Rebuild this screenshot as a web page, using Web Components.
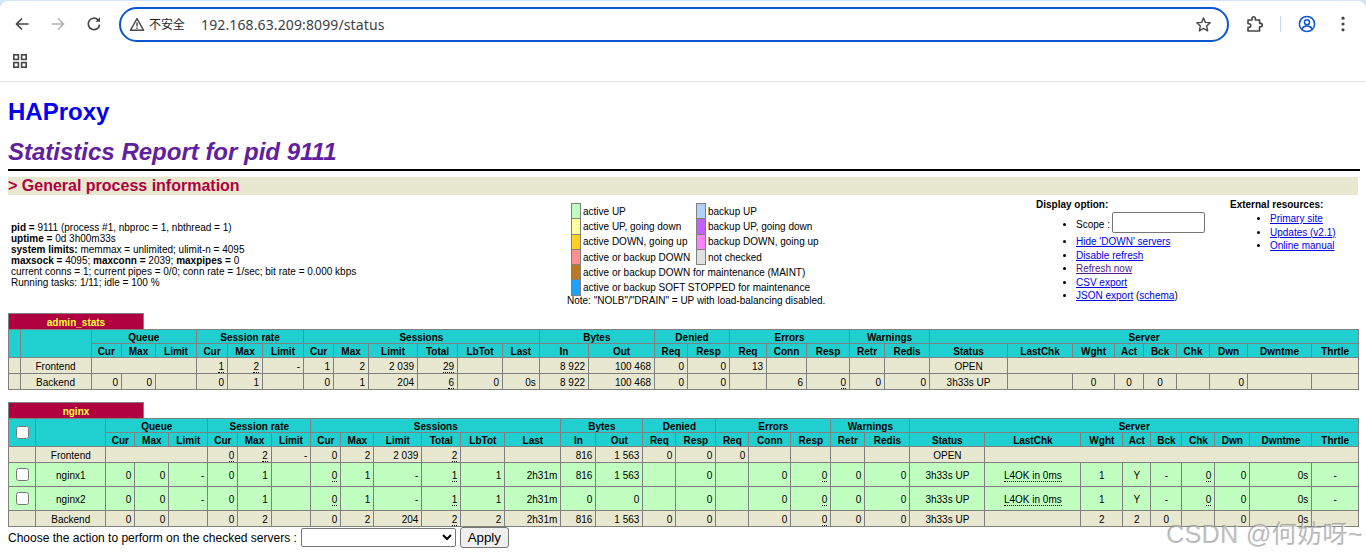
<!DOCTYPE html>
<html lang="zh"><head><meta charset="utf-8"><title>Statistics Report for HAProxy</title>
<style>
html,body{margin:0;padding:0;background:#fff;height:560px;overflow:hidden}
body{font-family:"Liberation Sans",Arial,sans-serif;font-size:12px}
water-mark{position:absolute;right:3px;bottom:10px}
</style></head><body>
<browser-chrome url="192.168.63.209:8099/status" security="不安全"></browser-chrome>
<stats-page>
  <report-head></report-head>
  <general-info>
    <process-info></process-info>
    <status-legend></status-legend>
    <display-options></display-options>
    <external-links></external-links>
  </general-info>
  <proxy-table name="admin_stats" table="admin"></proxy-table>
  <proxy-table name="nginx" table="nginx" checks></proxy-table>
  <action-form></action-form>
</stats-page>
<water-mark></water-mark>
<script>
const el=(name,css,html,init)=>{customElements.define(name,class extends HTMLElement{
  connectedCallback(){ if(this.shadowRoot)return; const r=this.attachShadow({mode:'open'});
    r.innerHTML=`<style>${css}</style>`+(typeof html==='function'?html(this):html); if(init)init(this,r);} });};

el('browser-chrome',`
:host{display:block;height:82px;box-sizing:border-box;border-bottom:1px solid #e3e3e3;background:#d3e3fd;padding-top:1px;font-family:"Noto Sans","Noto Sans CJK SC",sans-serif;color:#1f1f1f}
.inner{background:#fff;height:80px;border-radius:8px 8px 0 0;display:flex;flex-direction:column}
.tool{height:46px;flex:none;display:flex;align-items:center;padding:0 0 0 4px;box-sizing:border-box}
.btn{width:36px;height:36px;display:flex;align-items:center;justify-content:center;flex:none}
.btn svg{display:block}
.omni{flex:none;margin-left:7px;width:1110px;height:35px;box-sizing:border-box;border:2px solid #0b57d0;border-radius:18px;display:flex;align-items:center;padding:0 15px 0 8px}
.sec{font-size:12px;margin-left:4px;width:52px;color:#1f1f1f;letter-spacing:-.1px}
.url{font-size:14px;color:#3c4043;flex:1;letter-spacing:.12px}
.sep{width:1px;height:16px;background:#c7d7f2;flex:none;margin:0 8px 0 7px}
.book{height:28px;flex:none;padding:0 0 0 12px;display:flex;align-items:center}
`,h=>`<div class="inner"><div class="tool">
<span class="btn"><svg width="16" height="16" viewBox="0 0 16 16" fill="none" stroke="#474747" stroke-width="1.7"><path d="M14.5 8H2.5M8 2.5 2.5 8 8 13.5"/></svg></span>
<span class="btn"><svg width="16" height="16" viewBox="0 0 16 16" fill="none" stroke="#b4b4b4" stroke-width="1.7"><path d="M1.5 8h12M8 2.5 13.5 8 8 13.5"/></svg></span>
<span class="btn"><svg width="16" height="16" viewBox="0 0 16 16" fill="none" stroke="#474747" stroke-width="1.7"><path d="M13.6 8.6A5.7 5.7 0 1 1 12 3.9"/><path d="M14 1.2v4.6H9.4" fill="#474747" stroke="none"/></svg></span>
<div class="omni">
<svg width="16" height="15" viewBox="0 0 16 15" fill="none" stroke="#474747" stroke-width="1.4"><path d="M8 1.7 14.6 13.3H1.4Z" stroke-linejoin="round"/><path d="M8 5.6v4M8 10.6v1.4"/></svg>
<span class="sec">${h.getAttribute('security')}</span><span class="url">${h.getAttribute('url')}</span>
<svg width="17" height="17" viewBox="0 0 17 17" fill="none" stroke="#474747" stroke-width="1.4"><path d="M8.5 2 10.4 6.4 15.2 6.8 11.6 10 12.7 14.8 8.5 12.3 4.3 14.8 5.4 10 1.8 6.8 6.6 6.4Z" stroke-linejoin="round"/></svg>
</div>
<span class="btn" style="margin-left:8px"><svg width="18" height="18" viewBox="0 0 18 18" fill="none" stroke="#474747" stroke-width="1.6"><path d="M2 5h4V3.4a1.7 1.7 0 0 1 3.4 0V5h4.2v3.4h1a1.6 1.6 0 0 1 0 3.4h-1V16H2v-3.6h1a1.7 1.7 0 0 0 0-3.6H2Z" stroke-linejoin="round"/></svg></span>
<span class="sep"></span>
<span class="btn"><svg width="18" height="18" viewBox="0 0 18 18" fill="none" stroke="#0b57d0" stroke-width="1.5"><circle cx="9" cy="9" r="7.6"/><circle cx="9" cy="7.2" r="2.5"/><path d="M3.8 14c1.2-2.2 3-2.9 5.2-2.9s4 .7 5.2 2.9"/></svg></span>
<span class="btn"><svg width="4" height="16" viewBox="0 0 4 16" fill="#474747"><circle cx="2" cy="2.2" r="1.6"/><circle cx="2" cy="8" r="1.6"/><circle cx="2" cy="13.8" r="1.6"/></svg></span>
</div>
<div class="book"><svg width="16" height="16" viewBox="0 0 16 16" fill="none" stroke="#474747" stroke-width="1.6"><rect x="1.8" y="1.8" width="4.6" height="4.6"/><rect x="9.6" y="1.8" width="4.6" height="4.6"/><rect x="1.8" y="9.6" width="4.6" height="4.6"/><rect x="9.6" y="9.6" width="4.6" height="4.6"/></svg></div>
</div>`);

el('stats-page',`:host{display:block;padding:16px 8px 0;color:#000;font-family:"Liberation Sans",Arial,sans-serif;font-size:12px}`,`<slot></slot>`);

el('report-head',`
:host{display:block}
a{display:block;font-size:24px;line-height:28px;font-weight:bold;color:#0000ee;text-decoration:none;margin-bottom:12px}
h2{font-size:24px;line-height:28px;font-weight:bold;font-style:italic;color:#6020a0;margin:0}
.hr{border-bottom:2px solid #000;height:3px;margin:0 -2px 6px 0}
h3{font-size:16px;line-height:18px;height:18px;font-weight:bold;color:#b00040;background:#e8e8d0;margin:0}
`,`<a href="#">HAProxy</a><h2>Statistics Report for pid 9111</h2><div class="hr"></div><h3>&gt; General process information</h3>`);

el('general-info',`:host{display:flex;height:118px;font-size:10px;line-height:11px}`,`<slot></slot>`);

el('process-info',`:host{display:block;width:559px;box-sizing:border-box;padding:27px 0 0 3px;white-space:nowrap}`,
`<b>pid = </b>9111 (process #1, nbproc = 1, nbthread = 1)<br><b>uptime = </b>0d 3h00m33s<br><b>system limits:</b> memmax = unlimited; ulimit-n = 4095<br><b>maxsock = </b>4095; <b>maxconn = </b>2039; <b>maxpipes = </b>0<br>current conns = 1; current pipes = 0/0; conn rate = 1/sec; bit rate = 0.000 kbps<br>Running tasks: 1/11; idle = 100 %`);

el('status-legend',`
:host{display:block;width:469px;padding-top:8px;box-sizing:border-box;white-space:nowrap}
table{border-collapse:collapse;margin-left:4px}
td{padding:0;height:14.3px;font-size:10px;line-height:11px;vertical-align:middle}
td.s{width:8px;border:1px solid gray}
td.t{padding-left:2px;padding-right:1px;}
.note{margin-top:-1px}
`,`<table>
<tr><td class="s" style="background:#c0ffc0"></td><td class="t" style="width:112px">active UP</td><td class="s" style="background:#b0d0ff"></td><td class="t">backup UP</td></tr>
<tr><td class="s" style="background:#ffffa0"></td><td class="t">active UP, going down</td><td class="s" style="background:#c060ff"></td><td class="t">backup UP, going down</td></tr>
<tr><td class="s" style="background:#ffd020"></td><td class="t">active DOWN, going up</td><td class="s" style="background:#ff80ff"></td><td class="t">backup DOWN, going up</td></tr>
<tr><td class="s" style="background:#ff9090"></td><td class="t">active or backup DOWN</td><td class="s" style="background:#e0e0e0"></td><td class="t">not checked</td></tr>
<tr><td class="s" style="background:#c07820"></td><td class="t" colspan="3">active or backup DOWN for maintenance (MAINT)</td></tr>
<tr><td class="s" style="background:#20a0ff"></td><td class="t" colspan="3">active or backup SOFT STOPPED for maintenance</td></tr>
</table><div class="note">Note: "NOLB"/"DRAIN" = UP with load-balancing disabled.</div>`);

const listCss=`
b{display:block;line-height:11px}
ul{margin:0;padding:0 0 0 40px;list-style:disc}
li{line-height:11px;margin-bottom:2.5px;white-space:nowrap}
a{color:#0000ee}
a.v{color:#551a8b}
`;
el('display-options',`
:host{display:block;width:194px;padding-top:4px;box-sizing:border-box}${listCss}
ul{margin-top:4px}
li.scope{margin-bottom:1px;height:21px;line-height:21px;}
input{box-sizing:border-box;width:93px;height:21px;border:1px solid #767676;border-radius:2px;padding:0 2px;margin:-2px 0 0 -1px;vertical-align:top;background:#fff}
`,`<b>Display option:</b><ul>
<li class="scope">Scope : <input type="text"></li>
<li><a href="#">Hide 'DOWN' servers</a></li>
<li><a href="#">Disable refresh</a></li>
<li><a class="v" href="#">Refresh now</a></li>
<li><a href="#">CSV export</a></li>
<li><a href="#">JSON export</a> (<a href="#">schema</a>)</li></ul>`);

el('external-links',`
:host{display:block;flex:1;padding-top:4px;box-sizing:border-box}${listCss}
ul{margin-top:3px}
`,`<b>External resources:</b><ul>
<li><a href="#">Primary site</a></li><li><a href="#">Updates (v2.1)</a></li><li><a href="#">Online manual</a></li></ul>`);

/* ---- tables ---- */
const U=v=>({u:v});
const H='Cur,Max,Limit|Cur,Max,Limit|Cur,Max,Limit,Total,LbTot,Last|In,Out|Req,Resp|Req,Conn,Resp|Retr,Redis|Status,LastChk,Wght,Act,Bck,Chk,Dwn,Dwntme,Thrtle'.split('|').map(s=>s.split(','));
const G=['Queue','Session rate','Sessions','Bytes','Denied','Errors','Warnings','Server'];
const DATA={
 admin:{ w:[8,19.5,90.5,121,155,196,227,262,303,333,368,417,457,502,538.7,588,654,687,729,766,806,849,884,929,1007,1072,1114,1143,1176,1209,1247,1311,1358],
  rows:[
   {c:'fe',cells:[{e:''},{n:'Frontend'},{span:3},U(1),U(2),'-',1,2,'2 039',U(29),'','','8 922','100 468',0,0,13,'','','','',{m:'OPEN'},{span:8}]},
   {c:'fe',cells:[{e:''},{n:'Backend'},0,0,'',0,1,'',0,1,204,U(6),0,'0s','8 922','100 468',0,0,'',6,U(0),0,0,{m:'3h33s UP'},'',{m:0},{m:0},{m:0},'',0,'','']}
  ]},
 nginx:{ w:[8,35.3,105.3,134.3,168.3,207.3,237.3,270.7,310.3,340.3,373.3,421.3,460.3,504.3,560.3,595.3,642.3,675.3,715.3,748.3,790.3,830.3,864.3,909.3,984.3,1080.3,1122.3,1150.3,1181.3,1214.3,1249.3,1311.3,1358],
  rows:[
   {c:'fe',cells:[{e:''},{n:'Frontend'},{span:3},U(0),U(2),'-',0,2,'2 039',U(2),'','',816,'1 563',0,0,0,'','','','',{m:'OPEN'},{span:8}]},
   {c:'up',cells:[{cb:1},{n:'nginx1'},0,0,'-',0,1,'',U(0),1,'-',U(1),1,'2h31m',816,'1 563','',0,'',0,U(0),0,0,{m:'3h33s UP'},{m:U('L4OK in 0ms')},{m:1},{m:'Y'},{m:'-'},U(0),0,'0s',{m:'-'}]},
   {c:'up',cells:[{cb:1},{n:'nginx2'},0,0,'-',0,1,'',U(0),1,'-',U(1),1,'2h31m',0,0,'',0,'',0,U(0),0,0,{m:'3h33s UP'},{m:U('L4OK in 0ms')},{m:1},{m:'Y'},{m:'-'},U(0),0,'0s',{m:'-'}]},
   {c:'fe',cells:[{e:''},{n:'Backend'},0,0,'',0,2,'',0,2,204,U(2),2,'2h31m',816,'1 563',0,0,'',0,U(0),0,0,{m:'3h33s UP'},'',{m:2},{m:2},{m:0},'',0,'0s','']}
  ]}
};
const val=v=>(v&&typeof v==='object'&&'u' in v)?`<u>${v.u}</u>`:String(v);
const cell=c=>{
  if(c&&typeof c==='object'){
    if('span' in c) return `<td colspan="${c.span}"></td>`;
    if('e' in c) return `<td></td>`;
    if('n' in c) return `<td class="m">${c.n}</td>`;
    if('cb' in c) return `<td class="m cb"><input type="checkbox"></td>`;
    if('m' in c) return `<td class="m">${val(c.m)}</td>`;
  }
  return `<td>${val(c)}</td>`;
};
el('proxy-table',`
:host{display:block;margin-bottom:12px}
table{border-collapse:collapse;table-layout:fixed;border-style:none;font-size:10px;line-height:11px}
table.px{width:136px;height:16px}
th.px{background:#b00040;color:#ffff40;font-weight:bold;border:1px solid gray;border-bottom:none;padding:3px 3px 1px;white-space:nowrap;text-align:center}
table.main{width:1350px}
table.main th{background:#20d0d0;color:#000;font-weight:bold;text-align:center;border:1px solid gray;padding:2px 3px 0;white-space:nowrap}
table.main td{text-align:right;border:1px solid gray;padding:3px 3px 1px;white-space:nowrap;vertical-align:middle}
table.main td.cb{padding:2px 3px}
td.m{text-align:center!important}
tr.fe td{background:#e8e8d0}
tr.up td{background:#c0ffc0}
u{text-decoration:none;border-bottom:1px dotted #000}
input{margin:3px;vertical-align:middle;display:inline-block}
th input{margin:2px 3px 4px}
`,h=>{
 const d=DATA[h.getAttribute('table')], ck=h.hasAttribute('checks');
 const cols=d.w.slice(1).map((x,i)=>`<col style="width:${(x-d.w[i]).toFixed(1)}px">`).join('');
 return `<table class="px"><tr><th class="px">${h.getAttribute('name')}</th></tr></table>
 <table class="main"><colgroup>${cols}</colgroup>
 <tr><th rowspan="2">${ck?'<input type="checkbox">':''}</th><th rowspan="2"></th>${G.map((g,i)=>`<th colspan="${H[i].length}">${g}</th>`).join('')}</tr>
 <tr>${H.flat().map(t=>`<th>${t}</th>`).join('')}</tr>
 ${d.rows.map(r=>`<tr class="${r.c}">${r.cells.map(cell).join('')}</tr>`).join('')}
 </table>`;
});

el('action-form',`
:host{display:block;margin-top:-13px;font-size:12px;white-space:nowrap}
form{display:flex;align-items:center;margin:0;padding-top:1px}
select{width:155px;height:19px;margin:0 4px 0 4px;font:13.33px "Liberation Sans",Arial,sans-serif;background:#fff;border:1px solid #767676;border-radius:2px;padding:0}
button{width:49px;height:21px;padding:0;font:13.33px "Liberation Sans",Arial,sans-serif;background:#efefef;border:1px solid #767676;border-radius:3px;color:#000}
`,`<form onsubmit="return false">Choose the action to perform on the checked servers : <select><option></option></select><button>Apply</button></form>`);

el('water-mark',`:host{display:block;font:25px "Liberation Sans","Noto Sans CJK SC",sans-serif;color:rgba(120,120,120,.42);text-shadow:1px 1px 1px rgba(255,255,255,.8),0 0 1px rgba(120,120,120,.3);letter-spacing:.4px;white-space:nowrap;pointer-events:none}`,`CSDN @何妨呀~`);
</script>
</body></html>
